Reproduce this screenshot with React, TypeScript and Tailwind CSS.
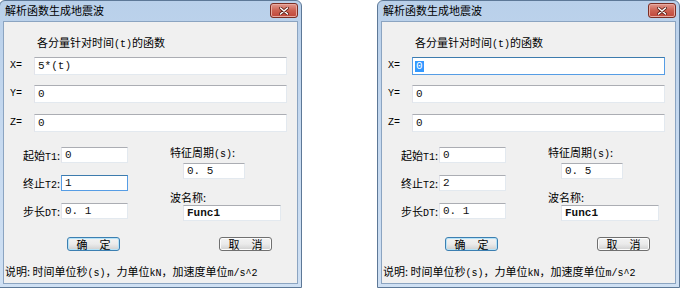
import React from "react";

const CJK = "font-['Noto_Sans_CJK_SC','Noto_Sans',sans-serif]";
const MONO = "font-['Liberation_Mono','Noto_Sans_CJK_SC',monospace]";

function Field({
  className,
  value,
  focus,
  selected,
  bold,
}: {
  className: string;
  value: string;
  focus?: boolean;
  selected?: boolean;
  bold?: boolean;
}) {
  const border = focus
    ? "border border-[#569de5] border-t-[#3d7bad]"
    : "border border-[#e3e9ef] border-t-[#abadb3] border-l-[#e2e3ea]";
  return (
    <div
      className={`${className} ${border} shrink-0 bg-white flex items-center pl-[3px] text-[11px] leading-none text-[#111] ${MONO} ${bold ? "font-bold text-[10px]" : ""} whitespace-pre`}
    >
      {selected ? (
        <span className="bg-[#3399ff] text-white px-[1px] -ml-[1px]">{value}</span>
      ) : (
        value
      )}
    </div>
  );
}

function Btn({ a, b, def }: { a: string; b: string; def?: boolean }) {
  return (
    <div
      className={`w-[53px] h-[14px] rounded-[3px] border ${def ? "border-[#3c7fb1] shadow-[inset_0_0_0_1px_#b6e3f8]" : "border-[#707070] shadow-[inset_0_0_0_1px_#fcfcfc]"} bg-gradient-to-b from-[#f2f2f2] via-[#ebebeb] to-[#cfcfcf] flex items-center justify-center gap-[12px] text-[11px] leading-none text-black ${CJK}`}
    >
      <span>{a}</span>
      <span>{b}</span>
    </div>
  );
}

function Label({ children, className }: { children: React.ReactNode; className?: string }) {
  return (
    <div className={`h-[14px] shrink-0 text-[11px] leading-[14px] text-black whitespace-nowrap ${CJK} ${className ?? ""}`}>
      {children}
    </div>
  );
}

function L({ children }: { children: React.ReactNode }) {
  return <span className={`text-[10px] ${MONO}`}>{children}</span>;
}

function Dialog({
  x,
  t2,
  focusX,
}: {
  x: string;
  t2: string;
  focusX?: boolean;
}) {
  return (
    <div className="w-[303px] h-[288px] border border-[#5d7897] rounded-t-[6px] bg-gradient-to-b from-[#b9d0ea] via-[#c7daf0] to-[#cfe0f3] flex flex-col shrink-0">
      <div className="h-[20px] shrink-0 flex items-start justify-between pl-[5px] pr-[3px]">
        <div className={`text-[11px] leading-[18px] text-black ${CJK}`}>解析函数生成地震波</div>
        <div className="mt-[2px] w-[28px] h-[15px] rounded-[3px] border border-[#7b2e24] bg-gradient-to-b from-[#e0998f] via-[#cc6151] to-[#c0463a] flex items-center justify-center shadow-[inset_0_0_0_1px_#e8aaa0]">
          <svg width="10" height="8" viewBox="0 0 10 8">
            <path d="M1.5 1 L8.5 7 M8.5 1 L1.5 7" stroke="#5a1b12" strokeWidth="3" strokeLinecap="round" />
            <path d="M1.5 1 L8.5 7 M8.5 1 L1.5 7" stroke="#ffffff" strokeWidth="1.6" strokeLinecap="round" />
          </svg>
        </div>
      </div>
      <div className="mx-[3px] mb-[3px] flex-1 bg-[#f0f0f0] border border-[#8ba4c1] flex flex-col">
        <Label className="mt-[13px] pl-[33px]">
          各分量针对时间<L>(t)</L>的函数
        </Label>
        <div className="mt-[8px] h-[18px] flex items-center">
          <div className={`w-[30px] pl-[6px] text-[10px] leading-[14px] text-black ${MONO}`}>X=</div>
          <Field className="w-[253px] h-[18px]" value={x} focus={focusX} selected={focusX} />
        </div>
        <div className="mt-[10px] h-[18px] flex items-center">
          <div className={`w-[30px] pl-[6px] text-[10px] leading-[14px] text-black ${MONO}`}>Y=</div>
          <Field className="w-[253px] h-[18px]" value="0" />
        </div>
        <div className="mt-[11px] h-[18px] flex items-center">
          <div className={`w-[30px] pl-[6px] text-[10px] leading-[14px] text-black ${MONO}`}>Z=</div>
          <Field className="w-[253px] h-[18px]" value="0" />
        </div>
        <div className="mt-[15px] h-[72px] flex items-start">
          <div className="w-[166px] flex flex-col gap-[12px]">
            <div className="h-[16px] flex items-center">
              <Label className="w-[57px] pr-[1px] text-right">
                起始<L>T1</L>:
              </Label>
              <Field className="w-[67px] h-[16px]" value="0" />
            </div>
            <div className="h-[16px] flex items-center">
              <Label className="w-[57px] pr-[1px] text-right">
                终止<L>T2</L>:
              </Label>
              <Field className="w-[67px] h-[16px]" value={t2} focus={!focusX} />
            </div>
            <div className="h-[16px] flex items-center">
              <Label className="w-[57px] pr-[1px] text-right">
                步长<L>DT</L>:
              </Label>
              <Field className="w-[67px] h-[16px]" value="0. 1" />
            </div>
          </div>
          <div className="-mt-[2px] flex flex-col">
            <Label>
              特征周期<L>(s)</L>:
            </Label>
            <Field className="ml-[13px] mt-[4px] w-[62px] h-[16px]" value="0. 5" />
            <Label className="mt-[11px]">波名称:</Label>
            <Field className="ml-[13px] mt-[1px] w-[98px] h-[16px]" value="Func1" bold />
          </div>
        </div>
        <div className="mt-[18px] h-[14px] flex">
          <div className="ml-[63px]">
            <Btn a="确" b="定" def />
          </div>
          <div className="ml-[99px]">
            <Btn a="取" b="消" />
          </div>
        </div>
        <Label className="mt-[13px] pl-[1px]">
          说明: 时间单位秒<L>(s)</L>，力单位<L>kN</L>，加速度单位<L>m/s^2</L>
        </Label>
      </div>
    </div>
  );
}

export default function App() {
  return (
    <div className="w-[686px] h-[293px] bg-white overflow-hidden">
      <div className="flex gap-[75px] -ml-[1px]">
        <Dialog x="5*(t)" t2="1" />
        <Dialog x="0" t2="2" focusX />
      </div>
    </div>
  );
}
